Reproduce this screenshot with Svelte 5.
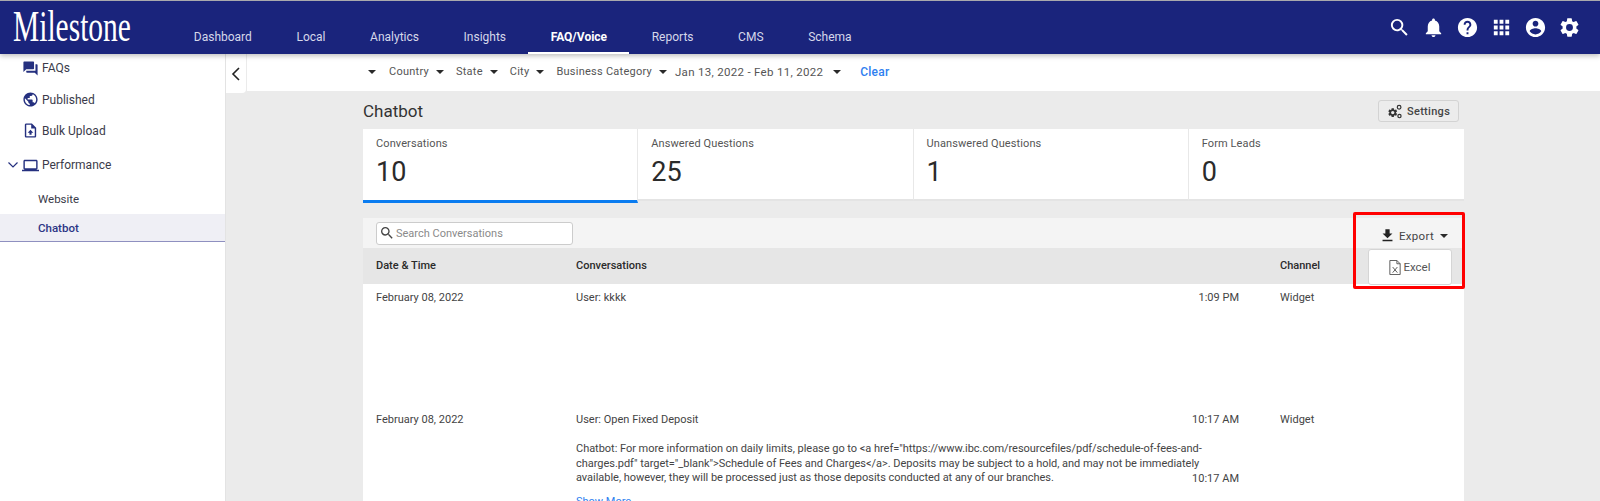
<!--
	Chatbot performance page
-->
<script lang="ts">
	const navItems = ['Dashboard', 'Local', 'Analytics', 'Insights', 'FAQ/Voice', 'Reports', 'CMS', 'Schema'];
	const filters = ['Country', 'State', 'City', 'Business Category'];
	const stats = [
		{ label: 'Conversations', value: 10, active: true },
		{ label: 'Answered Questions', value: 25 },
		{ label: 'Unanswered Questions', value: 1 },
		{ label: 'Form Leads', value: 0 }
	];
</script>

<div class="page">
	<header class="topbar">
		<div class="logo"><span>Milestone</span></div>
		<nav class="nav">
			{#each navItems as item}
				<span class="nav-item" class:current={item === 'FAQ/Voice'}>{item}</span>
			{/each}
		</nav>
		<div class="top-icons">
			<svg viewBox="0 0 24 24"><path d="M15.5 14h-.79l-.28-.27A6.47 6.47 0 0 0 16 9.5 6.5 6.5 0 1 0 9.5 16c1.61 0 3.09-.59 4.23-1.57l.27.28v.79l5 4.99L20.49 19l-4.99-5zm-6 0C7.01 14 5 11.99 5 9.5S7.01 5 9.5 5 14 7.01 14 9.5 11.99 14 9.5 14z"/></svg>
			<svg viewBox="0 0 24 24"><path d="M12 22c1.1 0 2-.9 2-2h-4c0 1.1.9 2 2 2zm6-6v-5c0-3.07-1.63-5.64-4.5-6.32V4c0-.83-.67-1.5-1.5-1.5s-1.5.67-1.5 1.5v.68C7.64 5.36 6 7.92 6 11v5l-2 2v1h16v-1l-2-2z"/></svg>
			<svg viewBox="0 0 24 24"><path d="M12 2C6.48 2 2 6.48 2 12s4.48 10 10 10 10-4.48 10-10S17.52 2 12 2zm1 17h-2v-2h2v2zm2.07-7.75-.9.92C13.45 12.9 13 13.5 13 15h-2v-.5c0-1.1.45-2.1 1.17-2.83l1.24-1.26c.37-.36.59-.86.59-1.41 0-1.1-.9-2-2-2s-2 .9-2 2H8c0-2.21 1.79-4 4-4s4 1.79 4 4c0 .88-.36 1.68-.93 2.25z"/></svg>
			<svg viewBox="0 0 24 24"><path d="M4 8h4V4H4v4zm6 12h4v-4h-4v4zm-6 0h4v-4H4v4zm0-6h4v-4H4v4zm6 0h4v-4h-4v4zm6-10v4h4V4h-4zm-6 4h4V4h-4v4zm6 6h4v-4h-4v4zm0 6h4v-4h-4v4z"/></svg>
			<svg viewBox="0 0 24 24"><path d="M12 2C6.48 2 2 6.48 2 12s4.48 10 10 10 10-4.48 10-10S17.52 2 12 2zm0 3c1.66 0 3 1.34 3 3s-1.34 3-3 3-3-1.34-3-3 1.34-3 3-3zm0 14.2c-2.5 0-4.71-1.28-6-3.22.03-1.99 4-3.08 6-3.08 1.99 0 5.97 1.09 6 3.08-1.29 1.94-3.5 3.22-6 3.22z"/></svg>
			<svg viewBox="0 0 24 24"><path d="M19.14 12.94c.04-.3.06-.61.06-.94 0-.32-.02-.64-.07-.94l2.03-1.58a.49.49 0 0 0 .12-.61l-1.92-3.32a.49.49 0 0 0-.59-.22l-2.39.96c-.5-.38-1.03-.7-1.62-.94l-.36-2.54a.48.48 0 0 0-.48-.41h-3.84c-.24 0-.43.17-.47.41l-.36 2.54c-.59.24-1.13.57-1.62.94l-2.39-.96a.49.49 0 0 0-.59.22L2.74 8.87c-.12.21-.08.47.12.61l2.03 1.58c-.05.3-.09.63-.09.94s.02.64.07.94l-2.03 1.58a.49.49 0 0 0-.12.61l1.92 3.32c.12.22.37.29.59.22l2.39-.96c.5.38 1.03.7 1.62.94l.36 2.54c.05.24.24.41.48.41h3.84c.24 0 .44-.17.47-.41l.36-2.54c.59-.24 1.13-.56 1.62-.94l2.39.96c.22.08.47 0 .59-.22l1.92-3.32c.12-.22.07-.47-.12-.61l-2.01-1.58zM12 15.6A3.6 3.6 0 1 1 12 8.4a3.6 3.6 0 0 1 0 7.2z"/></svg>
		</div>
	</header>

	<div class="body">
		<aside class="sidebar">
			<div class="side-row first">
				<svg class="side-icon" viewBox="0 0 24 24"><path d="M21 6h-2v9H6v2c0 .55.45 1 1 1h11l4 4V7c0-.55-.45-1-1-1zm-4 6V3c0-.55-.45-1-1-1H3c-.55 0-1 .45-1 1v14l4-4h10c.55 0 1-.45 1-1z"/></svg>
				FAQs
			</div>
			<div class="side-row">
				<svg class="side-icon" viewBox="0 0 24 24"><path d="M12 2C6.48 2 2 6.48 2 12s4.48 10 10 10 10-4.48 10-10S17.52 2 12 2zm-1 17.93c-3.95-.49-7-3.85-7-7.93 0-.62.08-1.21.21-1.79L9 15v1c0 1.1.9 2 2 2v1.93zm6.9-2.54c-.26-.81-1-1.39-1.9-1.39h-1v-3c0-.55-.45-1-1-1H8v-2h2c.55 0 1-.45 1-1V7h2c1.1 0 2-.9 2-2v-.41c2.93 1.19 5 4.06 5 7.41 0 2.08-.8 3.97-2.1 5.39z"/></svg>
				Published
			</div>
			<div class="side-row">
				<svg class="side-icon" viewBox="0 0 24 24"><path d="M14 2H6c-1.1 0-2 .9-2 2v16c0 1.1.9 2 2 2h12c1.1 0 2-.9 2-2V8l-6-6zm4 18H6V4h7v5h5v11zM12 11l-4 4h2.5v3h3v-3H16l-4-4z"/></svg>
				Bulk Upload
			</div>
			<div class="side-row group">
				<svg class="chevron" viewBox="0 0 12 12"><path d="M1.5 3.5 6 8l4.500-4.500" /></svg>
				<svg class="side-icon" viewBox="0 0 24 24"><path d="M20 18c1.100 0 2-.9 2-2V6c0-1.100-.9-2-2-2H4c-1.100 0-2 .9-2 2v10c0 1.100.9 2 2 2H0v2h24v-2h-4zM4 6h16v10H4V6z"/></svg>
				Performance
			</div>
			<div class="side-sub">Website</div>
			<div class="side-sub active">Chatbot</div>
		</aside>

		<main class="content">
			<div class="filter-line">
				<button class="collapse" aria-label="Collapse">
					<svg viewBox="0 0 12 16"><path d="M9 2 3 8l6 6" /></svg>
				</button>
				<div class="filters">
					<i class="caret lead"></i>
					{#each filters as f}
						<span class="filter">{f}<i class="caret"></i></span>
					{/each}
					<span class="filter date">Jan 13, 2022 - Feb 11, 2022<i class="caret"></i></span>
					<span class="clear">Clear</span>
				</div>
			</div>

			<div class="panel">
				<div class="title-row">
					<h1>Chatbot</h1>
					<button class="settings">
						<svg viewBox="0 0 24 24"><path d="M14.2 14.2c.03-.2.05-.4.05-.62s-.02-.42-.05-.62l1.340-1.040a.32.32 0 0 0 .08-.4l-1.270-2.190a.32.32 0 0 0-.39-.15l-1.580.63a4.700 4.700 0 0 0-1.070-.62l-.24-1.680A.32.32 0 0 0 10.750 7.250H8.220a.31.31 0 0 0-.31.27L7.670 9.200c-.39.160-.75.380-1.070.62l-1.580-.63a.32.32 0 0 0-.39.15L3.360 11.530a.3.3 0 0 0 .08.4l1.340 1.040c-.03.2-.06.42-.06.62s.01.42.05.62l-1.340 1.040a.32.32 0 0 0-.08.4l1.270 2.190c.08.15.24.19.39.15l1.580-.63c.33.25.68.46 1.070.62l.24 1.680c.03.16.16.27.32.27h2.530c.16 0 .29-.11.31-.27l.24-1.680c.39-.16.75-.37 1.070-.62l1.580.63c.15.05.31 0 .39-.15l1.270-2.190c.08-.15.05-.31-.08-.4zM9.500 15.960a2.380 2.380 0 1 1 0-4.760 2.380 2.380 0 0 1 0 4.760z"/><circle cx="18.500" cy="6" r="2.600" fill="none" stroke="currentColor" stroke-width="1.700"/><circle cx="19" cy="18.500" r="2.300" fill="none" stroke="currentColor" stroke-width="1.700"/></svg>
						Settings
					</button>
				</div>

				<div class="stats">
					{#each stats as s}
						<div class="stat" class:on={s.active}>
							<div class="stat-label">{s.label}</div>
							<div class="stat-value">{s.value}</div>
						</div>
					{/each}
				</div>

				<div class="table-card">
					<div class="toolbar">
						<div class="search">
							<svg viewBox="0 0 24 24"><path d="M15.500 14h-.79l-.28-.27A6.470 6.470 0 0 0 16 9.500 6.500 6.500 0 1 0 9.500 16c1.610 0 3.090-.59 4.230-1.570l.27.28v.79l5 4.990L20.490 19l-4.990-5zm-6 0C7.010 14 5 11.990 5 9.500S7.010 5 9.500 5 14 7.010 14 9.500 11.990 14 9.500 14z"/></svg>
							<span>Search Conversations</span>
						</div>
						<div class="export">
							<svg viewBox="0 0 24 24"><path d="M19 9h-4V3H9v6H5l7 7 7-7zM5 18v2h14v-2H5z"/></svg>
							Export
							<i class="caret"></i>
						</div>
					</div>

					<div class="row head">
						<div>Date &amp; Time</div>
						<div>Conversations</div>
						<div></div>
						<div>Channel</div>
					</div>

					<div class="row entry short">
						<div>February 08, 2022</div>
						<div>User: kkkk</div>
						<div class="time">1:09 PM</div>
						<div>Widget</div>
					</div>

					<div class="row entry">
						<div>February 08, 2022</div>
						<div>User: Open Fixed Deposit</div>
						<div class="time">10:17 AM</div>
						<div>Widget</div>
						<div></div>
						<div class="msg">Chatbot: For more information on daily limits, please go to &lt;a href="https://www.ibc.com/resourcefiles/pdf/schedule-of-fees-and-charges.pdf" target="_blank"&gt;Schedule of Fees and Charges&lt;/a&gt;. Deposits may be subject to a hold, and may not be immediately available, however, they will be processed just as those deposits conducted at any of our branches.</div>
						<div class="time end">10:17 AM</div>
						<div></div>
						<div></div>
						<div class="more">Show More</div>
					</div>

					<!-- annotation over the export menu -->
					<div class="highlight">
						<div class="excel">
							<svg viewBox="2 1.500 12 16"><path d="M2.500 2h7.500l3.500 3.500V17h-11z M10 2v3.500h3.500" fill="none" stroke="currentColor" stroke-width="1"/><path d="m5.500 9 5 6m0-6-5 6" fill="none" stroke="currentColor" stroke-width="1"/></svg>
							Excel
						</div>
					</div>
				</div>
			</div>
		</main>
	</div>
</div>

<style>
	:global(body) {
		margin: 0;
		background: #ebebeb;
	}

	.page {
		height: 501px;
		overflow: hidden;
		font-family: Roboto, 'Liberation Sans', sans-serif;
		color: #3d3d3d;
		border-top: 1px solid #a9a9ad;
		box-sizing: border-box;
	}

	.topbar {
		height: 53px;
		background: #1a247c;
		display: flex;
		align-items: stretch;
		position: relative;
		z-index: 2;
		box-shadow: 0 2px 5px rgba(0, 0, 0, 0.25);
	}

	.logo {
		width: 171.500px;
		box-sizing: border-box;
		padding: 4px 0 0 13px;
		font-family: 'Liberation Serif', serif;
		font-size: 44px;
		line-height: 44px;
		color: #fff;
	}

	.logo span {
		display: inline-block;
		transform: scaleX(0.67);
		transform-origin: left center;
	}

	.nav {
		display: flex;
		flex: 1;
		align-items: stretch;
	}

	.nav-item {
		padding: 28px 22.300px 0;
		font-size: 12px;
		line-height: 16px;
		color: #d6d8ea;
		white-space: nowrap;
		box-sizing: border-box;
	}

	.nav-item.current {
		color: #fff;
		font-weight: 700;
		border-bottom: 2px solid #fff;
	}

	.top-icons {
		display: flex;
		align-items: flex-start;
		gap: 11px;
		padding: 15px 19px 0 0;
	}

	.top-icons svg {
		width: 23px;
		height: 23px;
		fill: #fff;
	}

	.body {
		display: grid;
		grid-template-columns: 226px 1fr;
		height: 447px;
	}

	.sidebar {
		background: #fff;
		color: #3b3b4a;
		font-size: 12px;
		border-right: 1px solid #e3e3e3;
	}

	.side-row {
		display: flex;
		align-items: center;
		height: 31px;
		padding-left: 22px;
		gap: 3px;
	}

	.side-row.first {
		height: 28px;
		margin-bottom: 2px;
	}

	.side-row.group {
		padding-left: 7px;
		height: 38px;
	}

	.side-icon {
		width: 17px;
		height: 17px;
		fill: #25307f;
		flex: none;
	}

	.chevron {
		width: 12px;
		height: 12px;
		fill: none;
		stroke: #25307f;
		stroke-width: 1.2;
	}

	.side-sub {
		height: 30px;
		line-height: 30px;
		padding-left: 38px;
		font-size: 11.500px;
	}

	.side-sub.active {
		height: 28px;
		line-height: 28px;
		box-sizing: border-box;
		background: #efeff5;
		color: #2c3585;
		font-weight: 500;
		border-bottom: 1px solid #8f90c0;
	}

	.content {
		min-width: 0;
	}

	.filter-line {
		display: flex;
		height: 39px;
		background: #ebebeb;
	}

	.collapse {
		width: 20px;
		height: 39px;
		padding: 0;
		border: 0;
		background: #fff;
		border-radius: 0 0 4px 0;
		display: flex;
		align-items: center;
		justify-content: center;
	}

	.collapse svg {
		width: 12px;
		height: 16px;
		fill: none;
		stroke: #222;
		stroke-width: 1.600;
	}

	.filters {
		flex: 1;
		margin-left: 1px;
		height: 37px;
		background: #fff;
		display: flex;
		align-items: center;
		padding: 0 0 2px 121px;
		box-sizing: border-box;
		font-size: 11px;
		color: #555;
		letter-spacing: 0.25px;
	}

	.filter {
		display: inline-flex;
		align-items: center;
		margin-right: 12px;
	}

	.filter:nth-of-type(4) {
		margin-right: 8px;
	}

	.filter.date {
		font-size: 11.500px;
		margin-right: 0;
		letter-spacing: 0.3px;
	}

	.filter.date .caret {
		margin-left: 10px;
	}

	.caret {
		display: inline-block;
		width: 0;
		height: 0;
		border-left: 4px solid transparent;
		border-right: 4px solid transparent;
		border-top: 4px solid #2a2a2a;
		margin-left: 7px;
	}

	.caret.lead {
		margin: 0 13px 0 0;
	}

	.clear {
		margin-left: 19px;
		font-size: 12px;
		color: #2f7ff0;
		font-weight: 500;
	}

	.panel {
		width: 1101px;
		margin-left: 137px;
	}

	.title-row {
		display: flex;
		justify-content: space-between;
		align-items: center;
		height: 36px;
		padding-right: 5px;
	}

	h1 {
		margin: 0;
		font-size: 17px;
		font-weight: 400;
		color: #333;
	}

	.settings {
		display: flex;
		align-items: center;
		gap: 4px;
		width: 81px;
		height: 22px;
		padding: 0 0 0 7px;
		box-sizing: border-box;
		font: 500 11px Roboto, sans-serif;
		letter-spacing: 0.3px;
		color: #444;
		background: #ececec;
		border: 1px solid #d3d3d3;
		border-radius: 3px;
	}

	.settings svg {
		width: 17px;
		height: 17px;
		fill: #333;
		color: #333;
	}

	.stats {
		display: grid;
		grid-template-columns: repeat(4, 1fr);
		align-items: start;
		height: 74px;
		margin-bottom: 15px;
	}

	.stat {
		box-sizing: border-box;
		height: 72px;
		padding: 7px 13px 0;
		background: #fff;
		border-right: 1px solid #e8e8e8;
		border-bottom: 2px solid #e4e4e4;
	}

	.stat:last-child {
		border-right: 0;
	}

	.stat.on {
		height: 74px;
		border-bottom: 3px solid #0a7cf0;
	}

	.stat-label {
		font-size: 11px;
		line-height: 15px;
		color: #555;
		letter-spacing: 0.1px;
	}

	.stat-value {
		font-size: 27px;
		line-height: 32px;
		margin-top: 5px;
		color: #2b2b2b;
	}

	.table-card {
		position: relative;
		background: #fff;
		height: 300px;
	}

	.toolbar {
		height: 30px;
		background: #f4f4f4;
		display: flex;
		justify-content: space-between;
		align-items: center;
		padding: 0 16px 0 13px;
		box-sizing: border-box;
	}

	.search {
		display: flex;
		align-items: center;
		width: 197px;
		height: 23px;
		box-sizing: border-box;
		padding-left: 2px;
		gap: 1px;
		background: #fff;
		border: 1px solid #ccc;
		border-radius: 3px;
		font-size: 11px;
		color: #8a8a8a;
	}

	.search svg {
		width: 16px;
		height: 16px;
		fill: #444;
	}

	.export {
		display: flex;
		align-items: center;
		margin-top: 5px;
		font-size: 11.500px;
		color: #444;
		letter-spacing: 0.3px;
		gap: 6px;
	}

	.export svg {
		width: 17px;
		height: 17px;
		margin-right: -3px;
		fill: #222;
	}

	.export .caret {
		margin-left: 0;
	}

	.row {
		display: grid;
		grid-template-columns: 200px 1fr 100px 184px;
		padding-left: 13px;
		font-size: 11px;
		color: #444;
	}

	.row.head {
		height: 36px;
		line-height: 36px;
		background: #e6e6e6;
		font-weight: 500;
		color: #2b2b2b;
	}

	.row.entry {
		padding-top: 7px;
		line-height: 15px;
	}

	.row.entry.short {
		height: 121px;
		padding-top: 6px;
		box-sizing: border-box;
	}

	.time {
		text-align: right;
		padding-right: 41px;
	}

	.time.end {
		align-self: end;
	}

	.msg {
		margin-top: 15px;
		margin-right: -36px;
		line-height: 14.500px;
		letter-spacing: -0.03px;
	}

	.more {
		margin-top: 8px;
		color: #2f7ff0;
	}

	.highlight {
		position: absolute;
		top: -6px;
		right: -1px;
		width: 112px;
		height: 77px;
		box-sizing: border-box;
		border: 3px solid #f00;
		border-radius: 2px;
		padding: 34px 10px 0 12px;
	}

	.excel {
		height: 36px;
		box-sizing: border-box;
		display: flex;
		align-items: center;
		justify-content: center;
		gap: 2px;
		background: #fff;
		border: 1px solid #d5d5d5;
		border-radius: 3px;
		font-size: 11.500px;
		color: #555;
	}

	.excel svg {
		width: 12px;
		height: 15px;
		color: #555;
	}
</style>
